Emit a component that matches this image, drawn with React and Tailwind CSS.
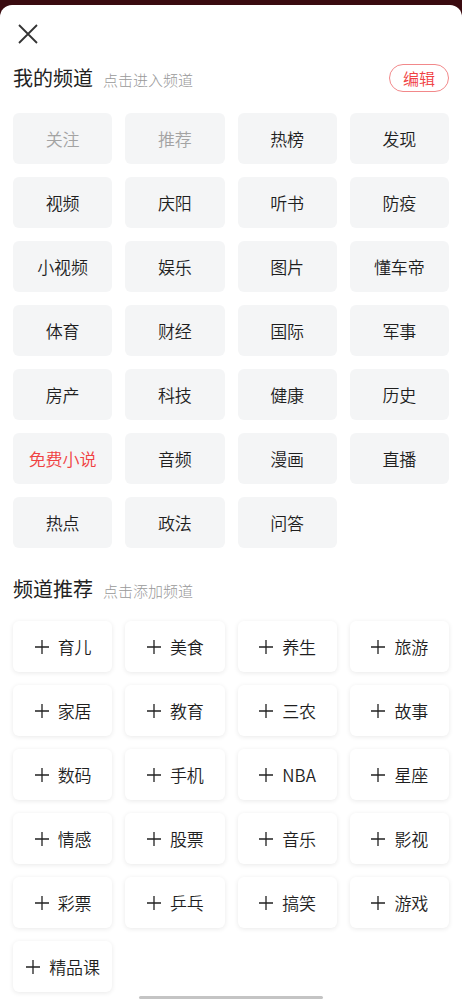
import React from 'react';

const misCanales = [
  { nombre: '关注', tipo: 'fijo' },
  { nombre: '推荐', tipo: 'fijo' },
  { nombre: '热榜' },
  { nombre: '发现' },
  { nombre: '视频' },
  { nombre: '庆阳' },
  { nombre: '听书' },
  { nombre: '防疫' },
  { nombre: '小视频' },
  { nombre: '娱乐' },
  { nombre: '图片' },
  { nombre: '懂车帝' },
  { nombre: '体育' },
  { nombre: '财经' },
  { nombre: '国际' },
  { nombre: '军事' },
  { nombre: '房产' },
  { nombre: '科技' },
  { nombre: '健康' },
  { nombre: '历史' },
  { nombre: '免费小说', tipo: 'rojo' },
  { nombre: '音频' },
  { nombre: '漫画' },
  { nombre: '直播' },
  { nombre: '热点' },
  { nombre: '政法' },
  { nombre: '问答' },
];

const recomendados = [
  '育儿', '美食', '养生', '旅游',
  '家居', '教育', '三农', '故事',
  '数码', '手机', 'NBA', '星座',
  '情感', '股票', '音乐', '影视',
  '彩票', '乒乓', '搞笑', '游戏',
  '精品课',
];

function Plus() {
  return (
    <svg width="16" height="16" viewBox="0 0 16 16" className="shrink-0">
      <path d="M8 1v14M1 8h14" stroke="#222" strokeWidth="1.3" />
    </svg>
  );
}

export default function App() {
  return (
    <div
      className="min-h-screen bg-[#3a0b10] pt-[5px] font-[350]"
      style={{ fontFamily: '"Noto Sans CJK SC", "Noto Sans", sans-serif' }}
    >
      <div className="relative min-h-[995px] rounded-t-[12px] bg-white">
        {/* cerrar */}
        <div className="pl-[18px] pt-[19px]">
          <svg width="20" height="20" viewBox="0 0 20 20">
            <path d="M1 1l18 18M19 1L1 19" stroke="#333" strokeWidth="1.8" />
          </svg>
        </div>

        {/* Mis canales */}
        <div className="mt-[20px] flex h-[28px] items-center justify-between pl-[13px] pr-[13px]">
          <div className="flex items-baseline gap-[10px]">
            <span className="text-[20px] font-normal leading-none text-[#222]">我的频道</span>
            <span className="text-[15px] font-light leading-none text-[#999]">点击进入频道</span>
          </div>
          <div className="flex h-[28px] w-[60px] items-center justify-center rounded-full border border-[#f2888a] text-[16px] leading-none text-[#f04142]">
            编辑
          </div>
        </div>

        <div className="mt-[21px] grid grid-cols-4 gap-[13px] px-[13px]">
          {misCanales.map((c) => (
            <div
              key={c.nombre}
              className={
                'flex h-[51px] items-center justify-center rounded-[6px] bg-[#f4f5f6] text-[17px] ' +
                (c.tipo === 'fijo'
                  ? 'text-[#a3a3a3]'
                  : c.tipo === 'rojo'
                  ? 'text-[#f04142]'
                  : 'text-[#1f1f1f]')
              }
            >
              {c.nombre}
            </div>
          ))}
        </div>

        {/* Recomendados */}
        <div className="mt-[27px] flex h-[28px] items-center pl-[13px]">
          <div className="flex items-baseline gap-[10px]">
            <span className="text-[20px] font-normal leading-none text-[#222]">频道推荐</span>
            <span className="text-[15px] font-light leading-none text-[#999]">点击添加频道</span>
          </div>
        </div>

        <div className="mt-[18px] grid grid-cols-4 gap-[13px] px-[13px]">
          {recomendados.map((r) => (
            <div
              key={r}
              className="flex h-[51px] items-center justify-center gap-[8px] rounded-[6px] bg-white text-[17px] text-[#1f1f1f] shadow-[0_1px_5px_rgba(0,0,0,0.09)]"
            >
              <Plus />
              <span>{r}</span>
            </div>
          ))}
        </div>

        {/* indicador */}
        <div className="absolute bottom-[1px] left-[139px] h-[3px] w-[184px] rounded-full bg-[#c4c4c4]" />
      </div>
    </div>
  );
}
